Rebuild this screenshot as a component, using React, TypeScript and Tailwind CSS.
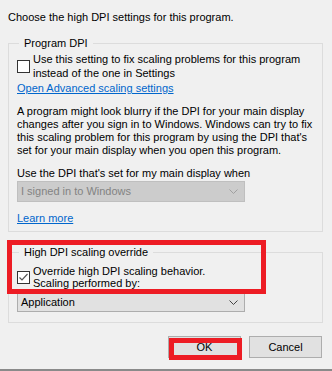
import React from "react";

function Chevron({ color }: { color: string }) {
  return (
    <svg width="9" height="5" viewBox="0 0 9 5" className="shrink-0">
      <path d="M0.5 0.5 L4.5 4.5 L8.5 0.5" fill="none" stroke={color} strokeWidth="1" />
    </svg>
  );
}

export default function App() {
  return (
    <div
      className="relative w-[332px] h-[371px] bg-[#f0f0f0] text-[11px] text-black overflow-hidden"
      style={{ fontFamily: '"Liberation Sans", Arial, sans-serif' }}
    >
      <div className="pl-[8px] pt-[10px] leading-[15px] whitespace-nowrap">Choose the high DPI settings for this program.</div>

      <fieldset className="ml-[8px] mt-[11px] w-[315px] h-[196px] border border-[#dcdcdc] pl-[8px]">
        <legend className="ml-[2px] px-[5px] leading-[15px]">Program DPI</legend>
        <div className="flex items-center mt-[1px]">
          <div className="w-[13px] h-[13px] border border-[#333333] bg-white shrink-0 mr-[3px]" />
          <div className="leading-[14px] whitespace-nowrap">
            Use this setting to fix scaling problems for this program
            <br />
            instead of the one in Settings
          </div>
        </div>
        <div className="leading-[13px] mt-[2px] text-[#0066cc] underline whitespace-nowrap">Open Advanced scaling settings</div>
        <div className="leading-[13px] mt-[10px] whitespace-nowrap">
          A program might look blurry if the DPI for your main display
          <br />
          changes after you sign in to Windows. Windows can try to fix
          <br />
          this scaling problem for this program by using the DPI that's
          <br />
          set for your main display when you open this program.
        </div>
        <div className="leading-[13px] mt-[10px] whitespace-nowrap">Use the DPI that's set for my main display when</div>
        <div className="mt-[1px] w-[228px] h-[21px] bg-[#cccccc] border border-[#bfbfbf] flex items-center justify-between pl-[3px] pr-[6px] text-[#838383]">
          <span>I signed in to Windows</span>
          <Chevron color="#a0a0a0" />
        </div>
        <div className="leading-[13px] mt-[10px] text-[#0066cc] underline">Learn more</div>
      </fieldset>

      <fieldset className="ml-[8px] mt-[13px] w-[315px] h-[78px] border border-[#dcdcdc] pl-[8px]">
        <legend className="ml-[2px] px-[5px] leading-[15px]">High DPI scaling override</legend>
        <div className="flex items-center mt-[5px]">
          <div className="w-[13px] h-[13px] border border-[#333333] bg-white shrink-0 mr-[3px] flex items-center justify-center">
            <svg width="11" height="11" viewBox="0 0 11 11">
              <path d="M1.5 5.5 L4 8 L9.5 2" fill="none" stroke="#555555" strokeWidth="1.2" />
            </svg>
          </div>
          <div className="leading-[12px] whitespace-nowrap">
            Override high DPI scaling behavior.
            <br />
            Scaling performed by:
          </div>
        </div>
        <div className="mt-[4px] w-[228px] h-[19px] bg-[#e1e1e1] border border-[#adadad] flex items-center justify-between pl-[3px] pr-[6px]">
          <span>Application</span>
          <Chevron color="#444444" />
        </div>
      </fieldset>

      <div className="flex justify-end gap-[8px] pr-[10px] mt-[13px]">
        <button className="w-[73px] h-[22px] bg-[#e1e1e1] border border-[#adadad] leading-[20px] text-center">OK</button>
        <button className="w-[73px] h-[22px] bg-[#e1e1e1] border border-[#adadad] leading-[20px] text-center">Cancel</button>
      </div>

      <div className="absolute left-0 right-0 bottom-0 h-[2px] bg-[#8a8a8a]" />

      <div className="absolute left-[7px] top-[240px] w-[259px] h-[54px] border-[5px] border-[#ed1c24]" />
      <div className="absolute left-[169px] top-[338px] w-[73px] h-[22px] border-[5px] border-[#ed1c24]" />
    </div>
  );
}
